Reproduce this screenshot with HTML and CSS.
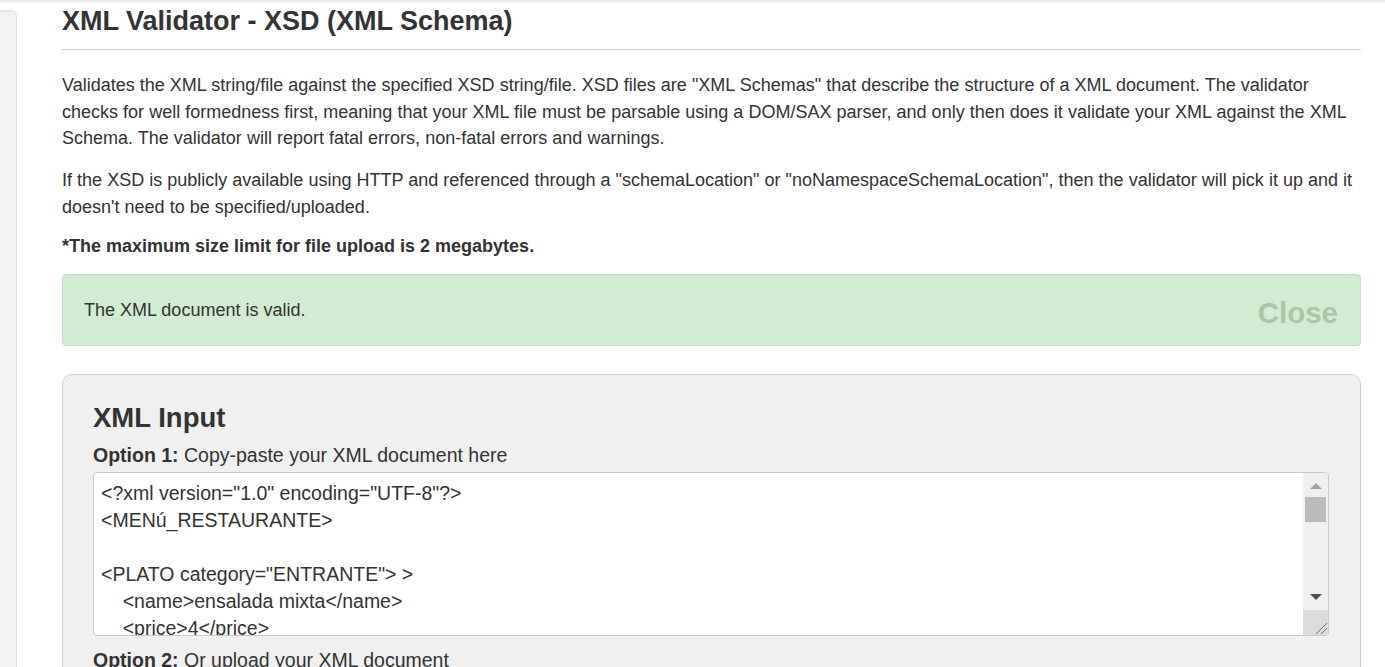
FILE: index.html
```html
<!DOCTYPE html>
<html lang="en">
<head>
<meta charset="utf-8">
<title>XML Validator - XSD (XML Schema)</title>
<link rel="stylesheet" href="styles.css">
</head>
<body>
<div class="topshadow"></div>
<div class="page">
  <aside class="well"></aside>
  <main class="main">
    <h1 class="title">XML Validator - XSD (XML Schema)</h1>
    <hr class="rule">
    <p class="lead">Validates the XML string/file against the specified XSD string/file. XSD files are "XML Schemas" that describe the structure of a XML document. The validator checks for well formedness first, meaning that your XML file must be parsable using a DOM/SAX parser, and only then does it validate your XML against the XML Schema. The validator will report fatal errors, non-fatal errors and warnings.</p>
    <p class="lead">If the XSD is publicly available using HTTP and referenced through a "schemaLocation" or "noNamespaceSchemaLocation", then the validator will pick it up and it doesn't need to be specified/uploaded.</p>
    <p class="limit">*The maximum size limit for file upload is 2 megabytes.</p>
    <div class="alert">
      <span class="alert-text">The XML document is valid.</span>
      <span class="close">Close</span>
    </div>
    <section class="panel">
      <h2 class="panel-title">XML Input</h2>
      <div class="option"><b>Option 1:</b> Copy-paste your XML document here</div>
      <div class="editor">
        <div class="editor-text">&lt;?xml version="1.0" encoding="UTF-8"?&gt;
&lt;MENú_RESTAURANTE&gt;

&lt;PLATO category="ENTRANTE"&gt; &gt;
    &lt;name&gt;ensalada mixta&lt;/name&gt;
    &lt;price&gt;4&lt;/price&gt;
    &lt;calories&gt;150&lt;/calories&gt;
&lt;/PLATO&gt;</div>
        <div class="scrollbar">
          <span class="arrow-up"></span>
          <span class="thumb"></span>
          <span class="track"></span>
          <span class="arrow-down"></span>
          <span class="resizer">
            <svg width="25" height="25" viewBox="0 0 25 25"><path d="M13 24 L24 13 M18 24 L24 18" stroke="#6e6e6e" stroke-width="1" fill="none"/></svg>
          </span>
        </div>
      </div>
      <div class="option"><b>Option 2:</b> Or upload your XML document</div>
    </section>
  </main>
</div>
</body>
</html>
```

FILE: styles.css
```css
html, body {
  margin: 0;
  padding: 0;
  background: #fff;
  height: 100%;
  overflow: hidden;
}
body {
  font-family: "Liberation Sans", Arial, sans-serif;
  color: #333;
}
.topshadow {
  height: 4px;
  background: linear-gradient(#e6e6e6, #fff);
}
.page {
  display: flex;
  align-items: flex-start;
  gap: 45px;
}
.well {
  width: 21px;
  margin-left: -6px;
  margin-top: 6px;
  height: 700px;
  flex: none;
  background: #f3f3f3;
  border: 1px solid #e2e2e2;
  border-radius: 6px;
  box-shadow: inset 0 1px 1px rgba(0,0,0,.05);
}
.main {
  width: 1299px;
  flex: none;
}
.title {
  font-size: 27px;
  font-weight: bold;
  line-height: 32px;
  margin: 1px 0 0;
  color: #333;
}
.rule {
  border: 0;
  border-top: 1px solid #cfcfcf;
  margin: 12px 0 22px;
}
.lead {
  font-size: 18px;
  word-spacing: 0.05px;
  line-height: 26.5px;
  margin: 0 0 15.5px;
}
.limit {
  font-size: 18px;
  font-weight: bold;
  line-height: 20px;
  margin: 2px 0 18px;
}
.alert {
  display: flex;
  align-items: center;
  justify-content: space-between;
  height: 70px;
  padding: 0 22px 0 21px;
  background: #d1ecd1;
  border: 1px solid #c1e1c1;
  border-radius: 4px;
  font-size: 18px;
}
.alert-text {
  margin-top: 2px;
}
.close {
  font-size: 29.5px;
  font-weight: bold;
  color: #a9c6a9;
  margin-top: 6px;
}
.panel {
  margin-top: 28px;
  background: #f0f0f0;
  border: 1px solid #d2d2d2;
  border-radius: 10px;
  padding: 28px 31px 20px 30px;
  height: 400px;
}
.panel-title {
  font-size: 27.5px;
  font-weight: bold;
  line-height: 30px;
  margin: 0 0 10px;
}
.option {
  font-size: 19.5px;
  line-height: 24px;
}
.editor {
  position: relative;
  margin: 5px 0 12px;
  height: 162px;
  background: #fff;
  border: 1px solid #c9c9c9;
  border-radius: 4px;
  overflow: hidden;
}
.editor-text {
  font-family: "Liberation Sans", Arial, sans-serif;
  font-size: 19.5px;
  line-height: 27px;
  white-space: pre;
  padding: 7px 7px;
  color: #333;
}
.scrollbar {
  position: absolute;
  top: 0;
  right: 0;
  width: 25px;
  height: 100%;
  background: #f0f0f0;
  display: flex;
  flex-direction: column;
  align-items: center;
}
.arrow-up {
  margin-top: 10px;
  width: 0;
  height: 0;
  border-left: 6px solid transparent;
  border-right: 6px solid transparent;
  border-bottom: 6px solid #a3a3a3;
}
.thumb {
  margin-top: 8px;
  width: 21px;
  height: 25px;
  background: #bcbcbc;
}
.track {
  flex: 1;
}
.arrow-down {
  width: 0;
  height: 0;
  border-left: 6px solid transparent;
  border-right: 6px solid transparent;
  border-top: 6px solid #505050;
  margin-bottom: 10px;
}
.resizer {
  width: 25px;
  height: 25px;
  background: #dcdcdc;
  display: block;
}
.resizer svg {
  display: block;
}
```
